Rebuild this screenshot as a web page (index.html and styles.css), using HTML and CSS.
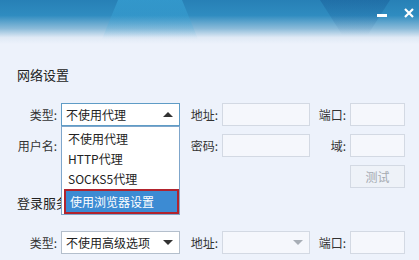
FILE: index.html
```html
<!DOCTYPE html>
<html>
    <head>
        <title>代理设置</title>
        <meta charset="utf-8">
        <link rel="stylesheet" href="styles.css">
    </head>
    <body>
        <div class="window">
            <div class="titlebar">
                <div class="beam beam-a"></div>
                <div class="beam beam-b"></div>
                <div class="controls">
                    <span class="btn-min"></span>
                    <svg class="btn-close" width="10" height="10" viewBox="0 0 10 10"><path d="M1 1L9 9M9 1L1 9" stroke="#fff" stroke-width="2.2"/></svg>
                </div>
            </div>

            <h2 class="section">网络设置</h2>
            <div class="form">
                <label>类型:</label>
                <div class="select open">不使用代理<span class="tri up"></span></div>
                <label>地址:</label>
                <div class="field"></div>
                <label>端口:</label>
                <div class="field"></div>

                <label>用户名:</label>
                <div></div>
                <label>密码:</label>
                <div class="field"></div>
                <label>域:</label>
                <div class="field"></div>

                <div></div><div></div><div></div><div></div><div></div>
                <div class="button disabled">测试</div>

                <ul class="dropdown">
                    <li>不使用代理</li>
                    <li>HTTP代理</li>
                    <li>SOCKS5代理</li>
                    <li class="active">使用浏览器设置</li>
                </ul>
            </div>

            <h2 class="section second">登录服务器设置</h2>
            <div class="form">
                <label>类型:</label>
                <div class="select">不使用高级选项<span class="tri down"></span></div>
                <label>地址:</label>
                <div class="field combo"><span class="tri down grey"></span></div>
                <label>端口:</label>
                <div class="field"></div>
            </div>
        </div>
    </body>
</html>
```
FILE: styles.css
```css
* { box-sizing: border-box; }
body { margin: 0; font-family: "Noto Sans CJK SC", "Microsoft YaHei", sans-serif; font-size: 12px; color: #222; }
.window { width: 419px; height: 260px; background: #edf2fb; overflow: hidden; }

.titlebar { position: relative; height: 44px; background: linear-gradient(to bottom, #2780b6 0%, #2f8cc0 35%, #8bbbd9 65%, #dfe9f5 85%, #edf2fb 100%); overflow: hidden; }
.beam { position: absolute; top: 0; height: 44px; }
.beam-a { left: 100px; width: 100px; background: linear-gradient(to bottom, rgba(60,170,220,0.55), rgba(160,215,240,0) 90%); clip-path: polygon(18% 0, 82% 0, 100% 100%, 0 100%); }
.beam-b { left: 320px; width: 70px; background: linear-gradient(to bottom, rgba(20,80,140,0.35), rgba(20,80,140,0) 80%); clip-path: polygon(0 0, 100% 0, 60% 100%, 40% 100%); }
.controls { position: absolute; right: 5px; top: 8px; display: flex; align-items: center; gap: 17px; }
.btn-min { width: 10px; height: 3px; background: #fff; margin-top: 5px; }

.section { margin: 22px 0 0 17px; font-size: 13px; font-weight: normal; color: #222; line-height: 18px; }
.section.second { margin-top: 6px; }

.form { position: relative; display: grid; grid-template-columns: 42px 119px 38px 88px 36px 55px; column-gap: 2px; row-gap: 8px; padding-left: 17px; margin-top: 19px; }
.section.second + .form { margin-top: 19px; }
.form label { height: 23px; line-height: 23px; text-align: right; padding-right: 2px; color: #333; }
.field { height: 23px; background: #f5f7fc; border: 1px solid #d3d9e3; }
.select { position: relative; height: 23px; line-height: 21px; padding-left: 4px; background: #fff; border: 1px solid #b4bfcc; }
.select.open { border-color: #5f9cc6; }
.combo { position: relative; }

.tri { position: absolute; right: 6px; top: 8px; width: 0; height: 0; border-left: 5px solid transparent; border-right: 5px solid transparent; }
.tri.up { border-bottom: 5px solid #333; }
.tri.down { border-top: 5px solid #333; }
.tri.grey { border-top-color: #a8aeb6; }

.button { height: 23px; line-height: 21px; text-align: center; background: #eef2f8; border: 1px solid #d3d9e3; }
.button.disabled { color: #a4a9b0; }

.dropdown { position: absolute; left: 61px; top: 23px; width: 119px; margin: 0; padding: 2px 0 0 0; list-style: none; background: #fff; border: 1px solid #7fa6cb; }
.dropdown li { height: 20px; line-height: 20px; padding-left: 6px; }
.dropdown li.active { height: 25px; line-height: 21px; margin-left: 2px; padding-left: 4px; background: #3c8bd3; color: #fff; border: 2px solid #b2232d; }
```
